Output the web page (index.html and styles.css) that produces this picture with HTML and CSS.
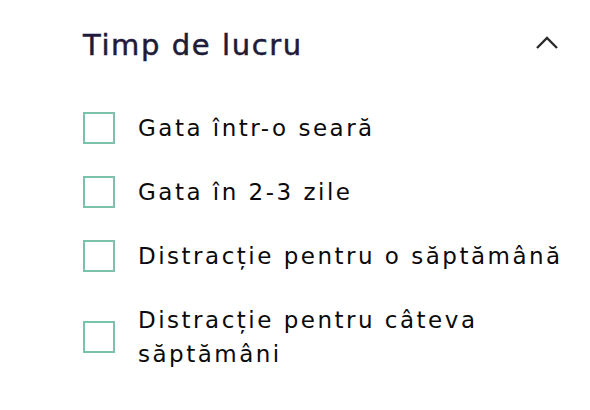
FILE: index.html
```html
<!DOCTYPE html>
<html lang="ro">
<head>
  <meta charset="UTF-8">
  <meta name="viewport" content="width=device-width, initial-scale=1.0">
  <title>Filtre</title>
  <link rel="stylesheet" href="styles.css">
</head>
<body>

<div class="filter">
  <div class="filter-header">
    <h2 class="filter-title">Timp de lucru</h2>
    <svg class="chevron" width="26" height="16" viewBox="0 0 26 16">
      <polyline points="3,13 13,3 23,13" fill="none" stroke="#2b2b2b" stroke-width="2.4"/>
    </svg>
  </div>

  <ul class="options">
    <li class="option"><span class="box"></span><span class="label">Gata într-o seară</span></li>
    <li class="option"><span class="box"></span><span class="label">Gata în 2-3 zile</span></li>
    <li class="option"><span class="box"></span><span class="label">Distracție pentru o săptămână</span></li>
    <li class="option"><span class="box"></span><span class="label">Distracție pentru câteva săptămâni</span></li>
  </ul>
</div>

</body>
</html>
```

FILE: styles.css
```css
body {
  margin: 0;
  background-color: #fff;
  font-family: "DejaVu Sans", sans-serif;
}

.filter {
  padding: 25px 20px 0 83px;
}

.filter-header {
  display: flex;
  justify-content: space-between;
  align-items: center;
}

.filter-title {
  margin: 0;
  font-size: 29px;
  font-weight: normal;
  letter-spacing: 1.6px;
  line-height: 40px;
  color: #1d1b3a;
  -webkit-text-stroke: 0.5px #1d1b3a;
}

.chevron {
  display: block;
  margin-right: 10px;
  margin-top: -4px;
}

.options {
  list-style: none;
  margin: 46px 0 0 0;
  padding: 0;
  display: flex;
  flex-direction: column;
  gap: 30px;
}

.option {
  display: flex;
  align-items: center;
  gap: 23px;
}

.box {
  flex: none;
  width: 32px;
  height: 32px;
  box-sizing: border-box;
  border: 2px solid #7ac2a8;
}

.label {
  font-size: 23px;
  letter-spacing: 2.5px;
  line-height: 34px;
  color: #0a0a0a;
  max-width: 445px;
}
```
